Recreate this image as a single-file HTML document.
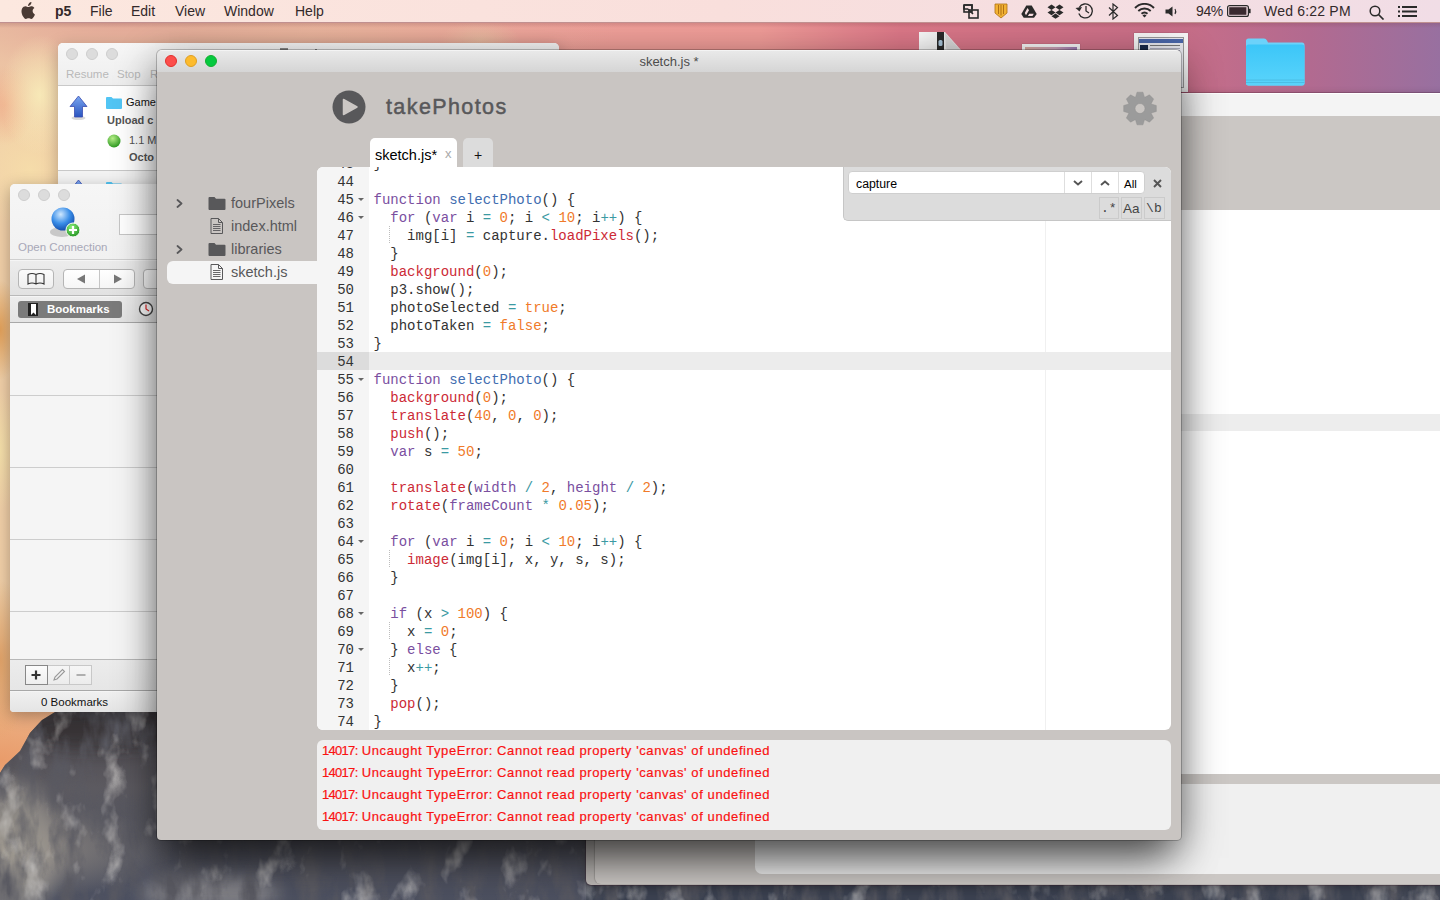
<!DOCTYPE html>
<html><head><meta charset="utf-8">
<style>
*{box-sizing:border-box;margin:0;padding:0}
html,body{width:1440px;height:900px;overflow:hidden}
body{position:relative;font-family:"Liberation Sans",sans-serif;background:#d9a48a}
.abs{position:absolute}
#desk{position:absolute;left:0;top:0;width:1440px;height:900px;
 background:
  linear-gradient(rgba(120,60,70,0.25),rgba(120,60,70,0) 6px) 0 22px/1440px 30px no-repeat,
  radial-gradient(ellipse 40px 60px at 40px 95px, rgba(248,236,185,0.9), rgba(248,236,185,0)),
  radial-gradient(ellipse 30px 40px at 5px 105px, rgba(240,170,135,0.7), rgba(240,170,135,0)),
  radial-gradient(ellipse 60px 60px at 30px 170px, rgba(246,222,170,0.9), rgba(246,222,170,0)),
  radial-gradient(ellipse 20px 50px at 0px 330px, rgba(225,155,80,0.9), rgba(225,155,80,0)),
  radial-gradient(ellipse 20px 60px at 0px 450px, rgba(246,226,170,0.9), rgba(246,226,170,0)),
  radial-gradient(ellipse 30px 80px at 0px 660px, rgba(225,160,100,0.9), rgba(225,160,100,0)),
  radial-gradient(ellipse 220px 120px at 0px 760px, rgba(232,150,100,0.9), rgba(232,150,100,0)),
  radial-gradient(ellipse 500px 110px at 120px 22px, rgba(226,168,152,0.95), rgba(232,184,160,0.6) 40%, rgba(240,200,160,0)),
  radial-gradient(ellipse 40px 20px at 480px 40px, rgba(236,196,166,0.8), rgba(236,196,166,0)),
  linear-gradient(90deg,#f1d0a8 0px,#eeb79a 200px,#f0a29a 520px,#f09c98 760px,#dc7888 900px,#c86e88 1180px,#b26a90 1310px,#9870a0 1440px);
}
#rock{position:absolute;left:0;top:0}
#menubar{position:absolute;left:0;top:0;width:1440px;height:23px;background:linear-gradient(90deg,#fce8df,#f9dfdc 50%,#f1dde6);border-bottom:1px solid #c09090;font-size:14px;color:#33292a}
#menubar span{position:absolute;top:3px}
.tl{position:absolute;width:12px;height:12px;border-radius:50%}
.win{position:absolute;overflow:hidden;border-radius:5px 5px 4px 4px}
.mono{font-family:"Liberation Mono",monospace}

#p5 .tb{position:absolute;left:0;top:0;width:1024px;height:22px;background:linear-gradient(#e9e9e9,#d5d5d5);border-top:1px solid #f4f4f4}
#p5 .tt{position:absolute;left:0;width:1024px;top:4px;text-align:center;font-size:13px;color:#4d4d4d}
.ln{position:absolute;right:0;width:52px;padding-right:15px;text-align:right;height:18px;line-height:18px;margin-top:1px;font-family:"Liberation Mono",monospace;font-size:14px;color:#333}
.fold{position:absolute;left:41px;width:0;height:0;border-left:3px solid transparent;border-right:3px solid transparent;border-top:3.5px solid #666}
.cl{position:absolute;left:56.5px;height:18px;line-height:18px;margin-top:1px;white-space:pre;font-family:"Liberation Mono",monospace;font-size:14px;color:#333}
.cl i{font-style:normal}
.k{color:#7a4f9f}.f{color:#cc2a36}.u{color:#3f6db0}.n{color:#f07a2a}.o{color:#3b9aa3}
.side{position:absolute;font-size:14.5px;color:#58585a}
.con{position:absolute;left:5px;font-size:13px;letter-spacing:0.6px;color:#fa1212;white-space:pre;-webkit-text-stroke:0.2px #fa1212}
</style></head><body>
<div id="desk"></div>
<svg id="rock" width="1440" height="900" viewBox="0 0 1440 900">
  <defs>
   <linearGradient id="rg" x1="0" y1="0" x2="0" y2="1">
    <stop offset="0" stop-color="#48444a"/><stop offset="0.4" stop-color="#5c5a60"/><stop offset="1" stop-color="#4c5060"/>
   </linearGradient>
   <radialGradient id="rl" cx="0" cy="0.75" r="0.25"><stop offset="0" stop-color="#a49c90" stop-opacity="0.8"/><stop offset="1" stop-color="#a49c90" stop-opacity="0"/></radialGradient>
   <filter id="blur6" x="-50%" y="-50%" width="200%" height="200%"><feGaussianBlur stdDeviation="8"/></filter>
   <filter id="texd" x="0" y="0" width="1" height="1"><feTurbulence type="fractalNoise" baseFrequency="0.05 0.02" numOctaves="4" seed="3" result="n"/><feColorMatrix in="n" type="matrix" values="0 0 0 0 0.1  0 0 0 0 0.1  0 0 0 0 0.12  2.5 0 0 0 -1.0" result="a"/><feComposite in="a" in2="SourceGraphic" operator="in"/></filter>
   <filter id="texl" x="0" y="0" width="1" height="1"><feTurbulence type="fractalNoise" baseFrequency="0.04 0.025" numOctaves="4" seed="11" result="n"/><feColorMatrix in="n" type="matrix" values="0 0 0 0 0.7  0 0 0 0 0.68  0 0 0 0 0.66  0 1.8 0 0 -1.0" result="a"/><feComposite in="a" in2="SourceGraphic" operator="in"/></filter>
  </defs>
  <g>
  <path id="rp" d="M0 773 L5 765 L20 751 L30 733 L42 720 L55 712 L300 712 L600 780 L1440 860 L1440 900 L0 900 Z" fill="url(#rg)"/>
  <rect x="0" y="700" width="700" height="200" fill="url(#rl)" clip-path="url(#rc)"/>
  <g clip-path="url(#rc)">
   <ellipse cx="18" cy="850" rx="40" ry="70" fill="#a8a298" opacity="0.55" filter="url(#blur6)"/>
   <ellipse cx="210" cy="893" rx="70" ry="18" fill="#b0aca8" opacity="0.5" filter="url(#blur6)"/>
   <ellipse cx="100" cy="730" rx="80" ry="20" fill="#2a2628" opacity="0.6" filter="url(#blur6)"/>
   <rect x="586" y="880" width="854" height="20" fill="#2e3444" opacity="0.55"/>
  </g>
  <path d="M0 773 L5 765 L20 751 L30 733 L42 720 L55 712 L300 712 L600 780 L1440 860 L1440 900 L0 900 Z" fill="#000" filter="url(#texd)"/>
  <path d="M0 773 L5 765 L20 751 L30 733 L42 720 L55 712 L300 712 L600 780 L1440 860 L1440 900 L0 900 Z" fill="#000" filter="url(#texl)"/>
  </g>
  <clipPath id="rc"><path d="M0 773 L5 765 L20 751 L30 733 L42 720 L55 712 L300 712 L600 780 L1440 860 L1440 900 L0 900 Z"/></clipPath>
</svg>

<div id="dicons">
  <svg class="abs" style="left:919px;top:32px" width="42" height="30" viewBox="0 0 42 30"><defs><linearGradient id="zg" x1="0" y1="0" x2="1" y2="0"><stop offset="0" stop-color="#fafafa"/><stop offset="1" stop-color="#e4e4e4"/></linearGradient></defs><path d="M0 0 L26 0 L42 18 L42 30 L0 30 Z" fill="url(#zg)"/><rect x="18" y="0" width="7" height="30" fill="#2a2a2a"/><rect x="19.5" y="8" width="4" height="6" rx="1.5" fill="#a8c4d8"/><path d="M26 1 L41 18 L30 18 Q27 18 27 15 Z" fill="#d8d8d8"/></svg>
  <div class="abs" style="left:1022px;top:44px;width:58px;height:20px;background:#f6f6f6;box-shadow:0 0 1px rgba(0,0,0,0.3)"><div class="abs" style="left:3px;top:3px;width:52px;height:15px;background:linear-gradient(90deg,#d8a8a0,#c8a0b8 60%,#9a78b0)"></div></div>
  <div class="abs" style="left:1134px;top:33px;width:54px;height:59px;background:#f6f6f6;box-shadow:0 0 1px rgba(0,0,0,0.4)">
    <div class="abs" style="left:4px;top:4px;width:46px;height:51px;background:#e8e8ee;border:1px solid #999"></div>
    <div class="abs" style="left:5px;top:6px;width:44px;height:4px;background:#4a66a8"></div>
    <div class="abs" style="left:6px;top:12px;width:8px;height:8px;background:#1a2a4a"></div>
    <div class="abs" style="left:16px;top:12px;width:30px;height:1px;background:#777"></div>
    <div class="abs" style="left:16px;top:15px;width:30px;height:1px;background:#aab"></div>
    <div class="abs" style="left:16px;top:17px;width:30px;height:1px;background:#aab"></div>
  </div>
  <svg class="abs" style="left:1245px;top:38px" width="60" height="48" viewBox="0 0 60 48"><defs><linearGradient id="fg" x1="0" y1="0" x2="0" y2="1"><stop offset="0" stop-color="#3cc6f8"/><stop offset="1" stop-color="#5ad4fb"/></linearGradient></defs><path d="M1 3 Q1 0.5 3.5 0.5 L19 0.5 Q21 0.5 22 2.5 L23 4.5 L57 4.5 Q59.5 4.5 59.5 7 L59.5 45 Q59.5 47.5 57 47.5 L3.5 47.5 Q1 47.5 1 45 Z" fill="#6cd2fa"/><path d="M1 9 Q1 6.5 3.5 6.5 L57 6.5 Q59.5 6.5 59.5 9 L59.5 45 Q59.5 47.5 57 47.5 L3.5 47.5 Q1 47.5 1 45 Z" fill="url(#fg)"/><path d="M1 42h58.5M1 44.5h58.5" stroke="#48b8e0" stroke-width="0.8"/></svg>
</div>
<!-- back p5 window -->
<div class="win" id="backwin" style="left:586px;top:93px;width:900px;height:792px;background:#bdb9b6;border-radius:5px 0 0 5px;box-shadow:0 0 0 1px rgba(60,20,40,0.25),0 2px 8px rgba(0,0,0,0.3)">
  <div class="abs" style="left:9px;top:0;width:891px;height:791px;background:#cbc7c4;border-radius:5px 0 0 6px;box-shadow:-1px 0 1px rgba(0,0,0,0.15)"></div>
  <div class="abs" style="left:0;top:0;width:900px;height:23px;background:#f4f4f4;border-top:1px solid #fff"></div>
  <div class="abs" style="left:169px;top:117px;width:731px;height:564px;background:#fff"></div>
  <div class="abs" style="left:169px;top:321px;width:731px;height:17px;background:#ededed"></div>
  <div class="abs" style="left:169px;top:691px;width:731px;height:90px;background:#f0f0f0;border-radius:7px 0 0 7px"></div>
</div>

<!-- transmit window -->
<div class="win" id="transmit" style="left:58px;top:43px;width:501px;height:520px;background:#fff;box-shadow:0 4px 16px rgba(0,0,0,0.25)">
  <div class="abs" style="left:0;top:0;width:501px;height:43px;background:linear-gradient(#f7f7f7,#eeeeee);border-bottom:1px solid #c9c9c9"></div>
  <div class="tl" style="left:8px;top:5px;background:#dcdcdc;border:1px solid #cdcdcd"></div>
  <div class="tl" style="left:28px;top:5px;background:#dcdcdc;border:1px solid #cdcdcd"></div>
  <div class="tl" style="left:48px;top:5px;background:#dcdcdc;border:1px solid #cdcdcd"></div>
  <div class="abs" style="left:222px;top:5px;width:8px;height:2px;background:#888"></div><div class="abs" style="left:257px;top:6px;width:2px;height:1px;background:#888"></div>
  <div class="abs" style="left:8px;top:25px;font-size:11.5px;color:#b9b9b9">Resume</div>
  <div class="abs" style="left:59px;top:25px;font-size:11.5px;color:#b9b9b9">Stop</div>
  <div class="abs" style="left:92px;top:25px;font-size:11.5px;color:#b9b9b9">R</div>
  <svg class="abs" style="left:11px;top:52px" width="19" height="25" viewBox="0 0 19 25"><defs><linearGradient id="ag" x1="0" y1="0" x2="0" y2="1"><stop offset="0" stop-color="#7aa6f0"/><stop offset="1" stop-color="#2a55c0"/></linearGradient></defs><ellipse cx="9.5" cy="23" rx="7" ry="2" fill="rgba(0,0,0,0.15)"/><path d="M9.5 1 L18 11.5 L13.5 11.5 L13.5 22 L5.5 22 L5.5 11.5 L1 11.5 Z" fill="url(#ag)" stroke="#3a4cb0" stroke-width="0.8"/></svg>
  <svg class="abs" style="left:48px;top:54px" width="16" height="12" viewBox="0 0 16 12"><path d="M0 1 Q0 0 1 0 L5.5 0 L7 1.5 L15 1.5 Q16 1.5 16 2.5 L16 11 Q16 12 15 12 L1 12 Q0 12 0 11 Z" fill="#52c5f4"/></svg>
  <div class="abs" style="left:68px;top:53px;font-size:11px;color:#111">Game</div>
  <div class="abs" style="left:49px;top:71px;font-size:11px;font-weight:bold;color:#555">Upload c</div>
  <svg class="abs" style="left:49px;top:91px" width="14" height="14" viewBox="0 0 14 14"><defs><radialGradient id="gg" cx="0.4" cy="0.3" r="0.7"><stop offset="0" stop-color="#b8f08a"/><stop offset="1" stop-color="#2e9a22"/></radialGradient></defs><circle cx="7" cy="7" r="6.5" fill="url(#gg)"/></svg>
  <div class="abs" style="left:71px;top:91px;font-size:11px;color:#555">1.1 M</div>
  <div class="abs" style="left:71px;top:108px;font-size:11px;font-weight:bold;color:#555">Octo</div>
  <div class="abs" style="left:0;top:127px;width:501px;height:1px;background:#c8c8c8"></div>
  <div class="abs" style="left:0;top:128px;width:501px;height:400px;background:#f3f3f3"></div>
  <svg class="abs" style="left:11px;top:136px" width="19" height="25" viewBox="0 0 19 25"><path d="M9.5 1 L18 11.5 L13.5 11.5 L13.5 22 L5.5 22 L5.5 11.5 L1 11.5 Z" fill="url(#ag)" stroke="#3a4cb0" stroke-width="0.8"/></svg>
  <svg class="abs" style="left:48px;top:139px" width="16" height="12" viewBox="0 0 16 12"><path d="M0 1 Q0 0 1 0 L5.5 0 L7 1.5 L15 1.5 Q16 1.5 16 2.5 L16 11 Q16 12 15 12 L1 12 Q0 12 0 11 Z" fill="#52c5f4"/></svg>
</div>

<!-- bookmarks window -->
<div class="win" id="bookm" style="left:10px;top:184px;width:160px;height:528px;background:#f5f5f5;box-shadow:0 4px 16px rgba(0,0,0,0.3)">
  <div class="abs" style="left:0;top:0;width:160px;height:76px;background:linear-gradient(#f6f6f6,#f1f1f1);border-bottom:1px solid #cfcfcf"></div>
  <div class="tl" style="left:8px;top:5px;background:#dcdcdc;border:1px solid #cdcdcd"></div>
  <div class="tl" style="left:28px;top:5px;background:#dcdcdc;border:1px solid #cdcdcd"></div>
  <div class="tl" style="left:48px;top:5px;background:#dcdcdc;border:1px solid #cdcdcd"></div>
  <svg class="abs" style="left:38px;top:22px" width="34" height="34" viewBox="0 0 34 34"><defs><radialGradient id="glb" cx="0.4" cy="0.3" r="0.8"><stop offset="0" stop-color="#cfe8ff"/><stop offset="0.5" stop-color="#3a8ee8"/><stop offset="1" stop-color="#0a3a9a"/></radialGradient><radialGradient id="gpl" cx="0.4" cy="0.3" r="0.8"><stop offset="0" stop-color="#8af07a"/><stop offset="1" stop-color="#1a8a1a"/></radialGradient></defs>
   <ellipse cx="14" cy="26" rx="12" ry="5" fill="#c8c8c8"/><circle cx="15" cy="13" r="11.5" fill="url(#glb)"/><circle cx="25" cy="24" r="7" fill="url(#gpl)" stroke="#fff" stroke-width="1"/><path d="M25 20v8M21 24h8" stroke="#fff" stroke-width="2.2"/></svg>
  <div class="abs" style="left:8px;top:57px;font-size:11.5px;color:#a8a8b8">Open Connection</div>
  <div class="abs" style="left:109px;top:30px;width:60px;height:21px;background:#fff;border:1px solid #c6c6c6"></div>
  <div class="abs" style="left:0;top:77px;width:160px;height:35px;background:linear-gradient(#ececec,#e2e2e2);border-bottom:1px solid #b9b9b9"></div>
  <div class="abs" style="left:8px;top:85px;width:36px;height:20px;background:linear-gradient(#fbfbfb,#efefef);border:1px solid #b5b5b5;border-radius:4px"></div>
  <svg class="abs" style="left:17px;top:88px" width="18" height="14" viewBox="0 0 18 14"><path d="M1 2.5 Q5 0.5 9 2.5 Q13 0.5 17 2.5 L17 12 Q13 10 9 12 Q5 10 1 12 Z M9 2.5 L9 12" fill="none" stroke="#333" stroke-width="1.1"/></svg>
  <div class="abs" style="left:53px;top:85px;width:72px;height:20px;background:linear-gradient(#fff,#f6f6f6);border:1px solid #b5b5b5;border-radius:4px"></div>
  <div class="abs" style="left:89px;top:86px;width:1px;height:18px;background:#c5c5c5"></div>
  <svg class="abs" style="left:66px;top:90px" width="10" height="10" viewBox="0 0 10 10"><path d="M1 5 L9 0.5 L9 9.5 Z" fill="#777"/></svg>
  <svg class="abs" style="left:103px;top:90px" width="10" height="10" viewBox="0 0 10 10"><path d="M9 5 L1 0.5 L1 9.5 Z" fill="#777"/></svg>
  <div class="abs" style="left:133px;top:85px;width:30px;height:20px;background:linear-gradient(#fff,#f6f6f6);border:1px solid #b5b5b5;border-radius:4px"></div>
  <div class="abs" style="left:0;top:113px;width:160px;height:26px;background:linear-gradient(#ececec,#e4e4e4);border-bottom:1px solid #a8a8a8"></div>
  <div class="abs" style="left:8px;top:117px;width:104px;height:17px;background:#7b7b7b;border-radius:3px"></div>
  <svg class="abs" style="left:18px;top:119px" width="10" height="13" viewBox="0 0 10 13"><rect x="0" y="0" width="10" height="13" fill="#222"/><path d="M3 1 L8 1 L8 12 L5.5 9.5 L3 12 Z" fill="#fff"/></svg>
  <div class="abs" style="left:37px;top:119px;font-size:11.5px;font-weight:bold;color:#fff">Bookmarks</div>
  <svg class="abs" style="left:128px;top:117px" width="16" height="16" viewBox="0 0 16 16"><circle cx="8" cy="8" r="6.5" fill="#fff" stroke="#444" stroke-width="1.4"/><path d="M8 3.5 L8 8 L11 10" fill="none" stroke="#d22" stroke-width="1.2"/></svg>
  <div class="abs" style="left:0;top:211px;width:160px;height:1px;background:#cdcdcd"></div>
  <div class="abs" style="left:0;top:283px;width:160px;height:1px;background:#cdcdcd"></div>
  <div class="abs" style="left:0;top:355px;width:160px;height:1px;background:#cdcdcd"></div>
  <div class="abs" style="left:0;top:427px;width:160px;height:1px;background:#cdcdcd"></div>
  <div class="abs" style="left:0;top:475px;width:160px;height:32px;background:linear-gradient(#ececec,#e6e6e6);border-top:1px solid #b8b8b8;border-bottom:1px solid #a8a8a8"></div>
  <div class="abs" style="left:15px;top:481px;width:23px;height:20px;background:linear-gradient(#fcfcfc,#eeeeee);border:1px solid #888"></div>
  <div class="abs" style="left:38px;top:481px;width:22px;height:20px;background:linear-gradient(#f6f6f6,#ececec);border:1px solid #c8c8c8;border-left:none"></div>
  <div class="abs" style="left:60px;top:481px;width:22px;height:20px;background:linear-gradient(#f6f6f6,#ececec);border:1px solid #c8c8c8;border-left:none"></div>
  <svg class="abs" style="left:20px;top:485px" width="12" height="12" viewBox="0 0 12 12"><path d="M6 1.5V10.5M1.5 6H10.5" stroke="#333" stroke-width="2.2"/></svg>
  <svg class="abs" style="left:42px;top:484px" width="14" height="14" viewBox="0 0 14 14"><path d="M2 12 L3 9 L10.5 1.5 L12.5 3.5 L5 11 Z" fill="none" stroke="#999" stroke-width="1.1"/></svg>
  <svg class="abs" style="left:65px;top:485px" width="12" height="12" viewBox="0 0 12 12"><path d="M1.5 6H10.5" stroke="#999" stroke-width="1.6"/></svg>
  <div class="abs" style="left:0;top:508px;width:160px;height:20px;background:linear-gradient(#f0f0f0,#e4e4e4)"></div>
  <div class="abs" style="left:31px;top:512px;font-size:11.5px;color:#111">0 Bookmarks</div>
</div>

<!-- main p5 window -->
<div class="win" id="p5" style="left:157px;top:50px;width:1024px;height:790px;background:#c9c5c2;box-shadow:0 0 0 1px rgba(0,0,0,0.22),0 10px 40px rgba(0,0,0,0.45),0 30px 40px -12px rgba(0,0,0,0.5)">
  <div class="tb"></div>
  <div class="tl" style="left:8px;top:5px;background:#fc4e4b;border:1px solid #e1302c"></div>
  <div class="tl" style="left:28px;top:5px;background:#fdbb2d;border:1px solid #de9f23"></div>
  <div class="tl" style="left:48px;top:5px;background:#05c93f;border:1px solid #14ad30"></div>
  <div class="tt">sketch.js *</div>
  <!-- header -->
  <svg class="abs" style="left:175px;top:40px" width="34" height="34" viewBox="0 0 34 34"><circle cx="17" cy="17" r="16.5" fill="#58585a"/><path d="M11.5 9.5 L25 17 L11.5 24.5 Z" fill="#cbc7c4" stroke="#cbc7c4" stroke-width="1.5" stroke-linejoin="round"/></svg>
  <div class="abs" style="left:229px;top:45px;font-size:21.5px;letter-spacing:1.4px;color:#58585a;-webkit-text-stroke:0.5px #58585a">takePhotos</div>
  <svg class="abs" style="left:966px;top:41px" width="34" height="35" viewBox="-17 -17 34 34"><path d="M-4.49 -11.34 L-2.98 -16.33 L2.98 -16.33 L4.49 -11.34 L4.84 -11.20 L9.44 -13.66 L13.66 -9.44 L11.20 -4.84 L11.34 -4.49 L16.33 -2.98 L16.33 2.98 L11.34 4.49 L11.20 4.84 L13.66 9.44 L9.44 13.66 L4.84 11.20 L4.49 11.34 L2.98 16.33 L-2.98 16.33 L-4.49 11.34 L-4.84 11.20 L-9.44 13.66 L-13.66 9.44 L-11.20 4.84 L-11.34 4.49 L-16.33 2.98 L-16.33 -2.98 L-11.34 -4.49 L-11.20 -4.84 L-13.66 -9.44 L-9.44 -13.66 L-4.84 -11.20 Z" fill="#9b9b9b" stroke="#8e8e8e" stroke-width="0.4"/><circle r="5" fill="#c9c5c2" stroke="#8e8e8e" stroke-width="0.5"/></svg>
  <!-- sidebar -->
  <div class="abs" style="left:10px;top:211px;width:150px;height:23px;background:#f5f5f5;border-radius:6px 0 0 6px"></div>
  <svg class="abs" style="left:19px;top:149px" width="8" height="9" viewBox="0 0 8 9"><path d="M1.5 1 L5.5 4.5 L1.5 8" fill="none" stroke="#58585a" stroke-width="1.8" stroke-linecap="round" stroke-linejoin="round"/></svg>
  <svg class="abs" style="left:19px;top:195px" width="8" height="9" viewBox="0 0 8 9"><path d="M1.5 1 L5.5 4.5 L1.5 8" fill="none" stroke="#58585a" stroke-width="1.8" stroke-linecap="round" stroke-linejoin="round"/></svg>
  <svg class="abs" style="left:51px;top:147px" width="18" height="13" viewBox="0 0 18 13"><path d="M0.5 1 Q0.5 0 1.5 0 L6.5 0 L8 1.8 L16.5 1.8 Q17.5 1.8 17.5 2.8 L17.5 12 Q17.5 13 16.5 13 L1.5 13 Q0.5 13 0.5 12 Z" fill="#58585a"/></svg>
  <svg class="abs" style="left:51px;top:193px" width="18" height="13" viewBox="0 0 18 13"><path d="M0.5 1 Q0.5 0 1.5 0 L6.5 0 L8 1.8 L16.5 1.8 Q17.5 1.8 17.5 2.8 L17.5 12 Q17.5 13 16.5 13 L1.5 13 Q0.5 13 0.5 12 Z" fill="#58585a"/></svg>
  <svg class="abs" style="left:53px;top:168px" width="14" height="16" viewBox="0 0 14 16"><path d="M1 0.5 L8.5 0.5 L12.5 4.5 L12.5 15.5 L1 15.5 Z M8.5 0.5 L8.5 4.5 L12.5 4.5" fill="none" stroke="#58585a" stroke-width="1"/><path d="M3 6.5H10.5M3 8.5H10.5M3 10.5H10.5M3 12.5H10.5" stroke="#58585a" stroke-width="0.9"/></svg>
  <svg class="abs" style="left:53px;top:214px" width="14" height="16" viewBox="0 0 14 16"><path d="M1 0.5 L8.5 0.5 L12.5 4.5 L12.5 15.5 L1 15.5 Z M8.5 0.5 L8.5 4.5 L12.5 4.5" fill="none" stroke="#58585a" stroke-width="1"/><path d="M3 6.5H10.5M3 8.5H10.5M3 10.5H10.5M3 12.5H10.5" stroke="#58585a" stroke-width="0.9"/></svg>
  <div class="side" style="left:74px;top:145px">fourPixels</div>
  <div class="side" style="left:74px;top:168px">index.html</div>
  <div class="side" style="left:74px;top:191px">libraries</div>
  <div class="side" style="left:74px;top:214px">sketch.js</div>
  <!-- tabs -->
  <div class="abs" style="left:213px;top:88px;width:87px;height:30px;background:#fff;border-radius:5px 5px 0 0"></div>
  <div class="abs" style="left:218px;top:96.5px;font-size:14.5px;color:#000">sketch.js*</div>
  <div class="abs" style="left:288px;top:96px;font-size:13px;color:#aaa">x</div>
  <div class="abs" style="left:306px;top:88px;width:30px;height:29px;background:#dcdcdc;border-radius:5px 5px 0 0"></div>
  <div class="abs" style="left:317px;top:97px;font-size:14px;color:#111">+</div>
  <!-- editor -->
  <div class="abs" id="editor" style="left:160px;top:117px;width:854px;height:563px;background:#fff;border-radius:6px;overflow:hidden">
    <div class="abs" style="left:0;top:0;width:52px;height:563px;background:#f5f5f5"></div>
    <div class="abs" style="left:728px;top:0;width:1px;height:563px;background:#f0f0f0"></div>
    <div class="abs" style="left:0;top:185px;width:52px;height:18px;background:#dcdcdc"></div>
    <div class="abs" style="left:52px;top:185px;width:802px;height:18px;background:#ececec"></div>
    <div class="abs" style="left:0;top:0;width:52px;height:563px"><div class="ln" style="top:-13px">43</div>
<div class="ln" style="top:5px">44</div>
<div class="ln" style="top:23px">45</div><div class="fold" style="top:31px"></div>
<div class="ln" style="top:41px">46</div><div class="fold" style="top:49px"></div>
<div class="ln" style="top:59px">47</div>
<div class="ln" style="top:77px">48</div>
<div class="ln" style="top:95px">49</div>
<div class="ln" style="top:113px">50</div>
<div class="ln" style="top:131px">51</div>
<div class="ln" style="top:149px">52</div>
<div class="ln" style="top:167px">53</div>
<div class="ln" style="top:185px">54</div>
<div class="ln" style="top:203px">55</div><div class="fold" style="top:211px"></div>
<div class="ln" style="top:221px">56</div>
<div class="ln" style="top:239px">57</div>
<div class="ln" style="top:257px">58</div>
<div class="ln" style="top:275px">59</div>
<div class="ln" style="top:293px">60</div>
<div class="ln" style="top:311px">61</div>
<div class="ln" style="top:329px">62</div>
<div class="ln" style="top:347px">63</div>
<div class="ln" style="top:365px">64</div><div class="fold" style="top:373px"></div>
<div class="ln" style="top:383px">65</div>
<div class="ln" style="top:401px">66</div>
<div class="ln" style="top:419px">67</div>
<div class="ln" style="top:437px">68</div><div class="fold" style="top:445px"></div>
<div class="ln" style="top:455px">69</div>
<div class="ln" style="top:473px">70</div><div class="fold" style="top:481px"></div>
<div class="ln" style="top:491px">71</div>
<div class="ln" style="top:509px">72</div>
<div class="ln" style="top:527px">73</div>
<div class="ln" style="top:545px">74</div>
</div>
    
<div class="cl" style="top:-13px">}</div>
<div class="cl" style="top:5px"></div>
<div class="cl" style="top:23px"><i class="k">function</i> <i class="u">selectPhoto</i>() {</div>
<div class="cl" style="top:41px">  <i class="k">for</i> (<i class="k">var</i> i <i class="o">=</i> <i class="n">0</i>; i <i class="o">&lt;</i> <i class="n">10</i>; i<i class="o">++</i>) {</div>
<div class="cl" style="top:59px">    img[i] <i class="o">=</i> capture.<i class="f">loadPixels</i>();</div>
<div class="cl" style="top:77px">  }</div>
<div class="cl" style="top:95px">  <i class="f">background</i>(<i class="n">0</i>);</div>
<div class="cl" style="top:113px">  p3.show();</div>
<div class="cl" style="top:131px">  photoSelected <i class="o">=</i> <i class="n">true</i>;</div>
<div class="cl" style="top:149px">  photoTaken <i class="o">=</i> <i class="n">false</i>;</div>
<div class="cl" style="top:167px">}</div>
<div class="cl" style="top:185px"></div>
<div class="cl" style="top:203px"><i class="k">function</i> <i class="u">selectPhoto</i>() {</div>
<div class="cl" style="top:221px">  <i class="f">background</i>(<i class="n">0</i>);</div>
<div class="cl" style="top:239px">  <i class="f">translate</i>(<i class="n">40</i>, <i class="n">0</i>, <i class="n">0</i>);</div>
<div class="cl" style="top:257px">  <i class="f">push</i>();</div>
<div class="cl" style="top:275px">  <i class="k">var</i> s <i class="o">=</i> <i class="n">50</i>;</div>
<div class="cl" style="top:293px"></div>
<div class="cl" style="top:311px">  <i class="f">translate</i>(<i class="k">width</i> <i class="o">/</i> <i class="n">2</i>, <i class="k">height</i> <i class="o">/</i> <i class="n">2</i>);</div>
<div class="cl" style="top:329px">  <i class="f">rotate</i>(<i class="k">frameCount</i> <i class="o">*</i> <i class="n">0.05</i>);</div>
<div class="cl" style="top:347px"></div>
<div class="cl" style="top:365px">  <i class="k">for</i> (<i class="k">var</i> i <i class="o">=</i> <i class="n">0</i>; i <i class="o">&lt;</i> <i class="n">10</i>; i<i class="o">++</i>) {</div>
<div class="cl" style="top:383px">    <i class="f">image</i>(img[i], x, y, s, s);</div>
<div class="cl" style="top:401px">  }</div>
<div class="cl" style="top:419px"></div>
<div class="cl" style="top:437px">  <i class="k">if</i> (x <i class="o">&gt;</i> <i class="n">100</i>) {</div>
<div class="cl" style="top:455px">    x <i class="o">=</i> <i class="n">0</i>;</div>
<div class="cl" style="top:473px">  } <i class="k">else</i> {</div>
<div class="cl" style="top:491px">    x<i class="o">++</i>;</div>
<div class="cl" style="top:509px">  }</div>
<div class="cl" style="top:527px">  <i class="f">pop</i>();</div>
<div class="cl" style="top:545px">}</div>
<div class="abs" style="left:72px;top:59px;width:1px;height:18px;background:repeating-linear-gradient(#bdbdbd 0 1px,transparent 1px 2px)"></div>
<div class="abs" style="left:72px;top:383px;width:1px;height:18px;background:repeating-linear-gradient(#bdbdbd 0 1px,transparent 1px 2px)"></div>
<div class="abs" style="left:72px;top:455px;width:1px;height:18px;background:repeating-linear-gradient(#bdbdbd 0 1px,transparent 1px 2px)"></div>
<div class="abs" style="left:72px;top:491px;width:1px;height:18px;background:repeating-linear-gradient(#bdbdbd 0 1px,transparent 1px 2px)"></div>
    <!-- search -->
    <div class="abs" id="search" style="left:526px;top:0;width:328px;height:54px;background:#dcdcdc;border-left:1px solid #c6c6c6;border-bottom:1px solid #c6c6c6;border-radius:0 5px 0 5px">
      <div class="abs" style="left:4px;top:4px;width:297px;height:23px;background:#fff;border:1px solid #cfcfcf;border-radius:4px"></div>
      <div class="abs" style="left:220px;top:5px;width:1px;height:21px;background:#dedede"></div>
      <div class="abs" style="left:247px;top:5px;width:1px;height:21px;background:#dedede"></div>
      <div class="abs" style="left:274px;top:5px;width:1px;height:21px;background:#dedede"></div>
      <div class="abs" style="left:12px;top:10px;font-size:12.3px;color:#000">capture</div>
      <svg class="abs" style="left:229px;top:13px" width="10" height="6" viewBox="0 0 10 6"><path d="M1 1 L5 4.5 L9 1" fill="none" stroke="#555" stroke-width="1.9"/></svg>
      <svg class="abs" style="left:256px;top:13px" width="10" height="6" viewBox="0 0 10 6"><path d="M1 5 L5 1.5 L9 5" fill="none" stroke="#555" stroke-width="1.9"/></svg>
      <div class="abs" style="left:280px;top:11px;font-size:11.5px;color:#000">All</div>
      <svg class="abs" style="left:309px;top:12px" width="9" height="9" viewBox="0 0 9 9"><path d="M1 1 L8 8 M8 1 L1 8" stroke="#555" stroke-width="1.9"/></svg>
      <div class="abs" style="left:255px;top:30px;width:20px;height:22px;border:1px solid #cbcbcb"></div>
      <div class="abs" style="left:277px;top:30px;width:21px;height:22px;border:1px solid #cbcbcb"></div>
      <div class="abs" style="left:300px;top:30px;width:21px;height:22px;border:1px solid #cbcbcb"></div>
      <div class="abs mono" style="left:257px;top:34px;font-size:13px;color:#444;letter-spacing:0px">.*</div>
      <div class="abs" style="left:279px;top:34px;font-size:13.5px;color:#444">Aa</div>
      <div class="abs mono" style="left:302px;top:34px;font-size:13px;color:#444;letter-spacing:0.3px">\b</div>
    </div>
  </div>
  <!-- console -->
  <div class="abs" id="console" style="left:160px;top:690px;width:854px;height:90px;background:#f0f0f0;border-radius:6px">
    <div class="con" style="top:3px"><span style="letter-spacing:-0.7px">14017:</span> Uncaught TypeError: Cannot read property 'canvas' of undefined</div>
    <div class="con" style="top:25px"><span style="letter-spacing:-0.7px">14017:</span> Uncaught TypeError: Cannot read property 'canvas' of undefined</div>
    <div class="con" style="top:47px"><span style="letter-spacing:-0.7px">14017:</span> Uncaught TypeError: Cannot read property 'canvas' of undefined</div>
    <div class="con" style="top:69px"><span style="letter-spacing:-0.7px">14017:</span> Uncaught TypeError: Cannot read property 'canvas' of undefined</div>
  </div>
</div>

<div id="menubar">
  <svg class="abs" style="left:21px;top:2px" width="14" height="17" viewBox="0 0 14 17"><path d="M11.6 9.1c0-2.1 1.7-3.1 1.8-3.2-1-1.4-2.5-1.6-3-1.7-1.3-.1-2.5.8-3.1.8-.7 0-1.6-.8-2.7-.8C3.2 4.2 1.9 5 1.2 6.3c-1.5 2.6-.4 6.4 1.1 8.5.7 1 1.5 2.2 2.6 2.1 1 0 1.4-.7 2.7-.7 1.2 0 1.6.7 2.7.7 1.1 0 1.8-1 2.5-2.1.8-1.2 1.1-2.3 1.1-2.4 0 0-2.3-.8-2.3-3.3zM9.5 2.8c.6-.7 1-1.7.9-2.7-.8 0-1.9.6-2.5 1.3-.5.6-1 1.600-.9 2.600.9.1 1.900-.5 2.500-1.200z" fill="#4a3a34"/></svg>
  <span style="left:55px;font-weight:bold">p5</span>
  <span style="left:90px">File</span>
  <span style="left:131px">Edit</span>
  <span style="left:175px">View</span>
  <span style="left:224px">Window</span>
  <span style="left:295px">Help</span>
  <span style="left:1196px;letter-spacing:-0.4px">94%</span>
  <span style="left:1264px;letter-spacing:0.2px">Wed 6:22 PM</span>
  <svg class="abs" style="left:963px;top:4px" width="16" height="15" viewBox="0 0 16 15"><path d="M1 1h8v4M5 5h-4v-4" fill="none" stroke="#2a2a2a" stroke-width="1.6"/><rect x="1" y="1" width="8" height="7" fill="none" stroke="#2a2a2a" stroke-width="1.6"/><rect x="6" y="6" width="9" height="8" fill="none" stroke="#2a2a2a" stroke-width="1.6"/><path d="M5 5l5 5" stroke="#2a2a2a" stroke-width="1.6"/></svg>
  <svg class="abs" style="left:994px;top:3px" width="14" height="16" viewBox="0 0 14 16"><path d="M1 1 L13 1 L13 10 L7 15 L1 10 Z" fill="#f2b234" stroke="#b07010" stroke-width="0.8"/><path d="M4.5 2v9M7 2v10.5M9.5 2v9" stroke="#a86a12" stroke-width="0.9"/></svg>
  <svg class="abs" style="left:1021px;top:5px" width="16" height="13" viewBox="0 0 16 13"><path d="M5.3 0.5h5.4l5 8.5-2.7 3.8H2.7L0.3 9z" fill="#2a2a2a"/><path d="M6.5 3 L3.8 8 L5 10.3 L8 5.2 Z M8.2 8.8h4.6l-1.3 2.1h-4.6z" fill="#f7dde0"/></svg>
  <svg class="abs" style="left:1047px;top:4px" width="17" height="15" viewBox="0 0 17 15"><g fill="#2a2a2a"><path d="M4.5 0.5L0.5 3.2 4.5 5.9 8.5 3.2z"/><path d="M12.5 0.5L8.5 3.2 12.5 5.9 16.5 3.2z"/><path d="M0.5 8.6L4.5 11.3 8.5 8.6 4.5 5.9z"/><path d="M16.5 8.6L12.5 11.3 8.5 8.6 12.5 5.9z"/><path d="M4.5 12.2L8.5 14.7 12.5 12.2 8.5 9.6z"/></g></svg>
  <svg class="abs" style="left:1075px;top:2px" width="19" height="17" viewBox="0 0 19 17"><path d="M4.2 5.5 A7 7 0 1 1 3.8 11.5" fill="none" stroke="#2a2a2a" stroke-width="1.3"/><path d="M0.5 6 L4.5 9.5 L7 5 Z" fill="#2a2a2a"/><path d="M11 4v5l3 2" fill="none" stroke="#2a2a2a" stroke-width="1.3"/></svg>
  <svg class="abs" style="left:1108px;top:3px" width="11" height="17" viewBox="0 0 11 17"><path d="M1 4.5 L9.5 12.5 L5 16 L5 1 L9.5 4.5 L1 12.5" fill="none" stroke="#2a2a2a" stroke-width="1.2"/></svg>
  <svg class="abs" style="left:1134px;top:3px" width="21" height="15" viewBox="0 0 21 15"><path d="M1 5 A13 13 0 0 1 20 5" fill="none" stroke="#2a2a2a" stroke-width="1.9"/><path d="M4.3 8 A9 9 0 0 1 16.7 8" fill="none" stroke="#2a2a2a" stroke-width="1.9"/><path d="M7.5 10.8 A4.5 4.5 0 0 1 13.5 10.8" fill="none" stroke="#2a2a2a" stroke-width="1.9"/><path d="M10.5 14.5 L8.5 12.5 A3 3 0 0 1 12.5 12.5 Z" fill="#2a2a2a"/></svg>
  <svg class="abs" style="left:1165px;top:6px" width="13" height="11" viewBox="0 0 13 11"><path d="M0.5 3.5h3l4-3v10l-4-3h-3z" fill="#2a2a2a"/><path d="M10 3 Q11.5 5.5 10 8" fill="none" stroke="#2a2a2a" stroke-width="1.1"/></svg>
  <svg class="abs" style="left:1227px;top:5px" width="24" height="12" viewBox="0 0 24 12"><rect x="0.6" y="0.6" width="20.8" height="10.8" rx="2" fill="none" stroke="#2a2a2a" stroke-width="1.2"/><rect x="2.2" y="2.2" width="17.2" height="7.6" fill="#3a2a30"/><rect x="22" y="3.8" width="1.6" height="4.4" fill="#2a2a2a"/></svg>
  <svg class="abs" style="left:1369px;top:5px" width="16" height="15" viewBox="0 0 16 15"><circle cx="6" cy="6" r="4.8" fill="none" stroke="#2a2a2a" stroke-width="1.5"/><path d="M9.5 9.5 L14.5 14.5" stroke="#2a2a2a" stroke-width="1.7"/></svg>
  <svg class="abs" style="left:1398px;top:6px" width="19" height="11" viewBox="0 0 19 11"><g fill="#2a2a2a"><rect x="0" y="0" width="2" height="2"/><rect x="0" y="4.5" width="2" height="2"/><rect x="0" y="9" width="2" height="2"/><rect x="4" y="0" width="15" height="2"/><rect x="4" y="4.5" width="15" height="2"/><rect x="4" y="9" width="15" height="2"/></g></svg>
</div>
</body></html>
